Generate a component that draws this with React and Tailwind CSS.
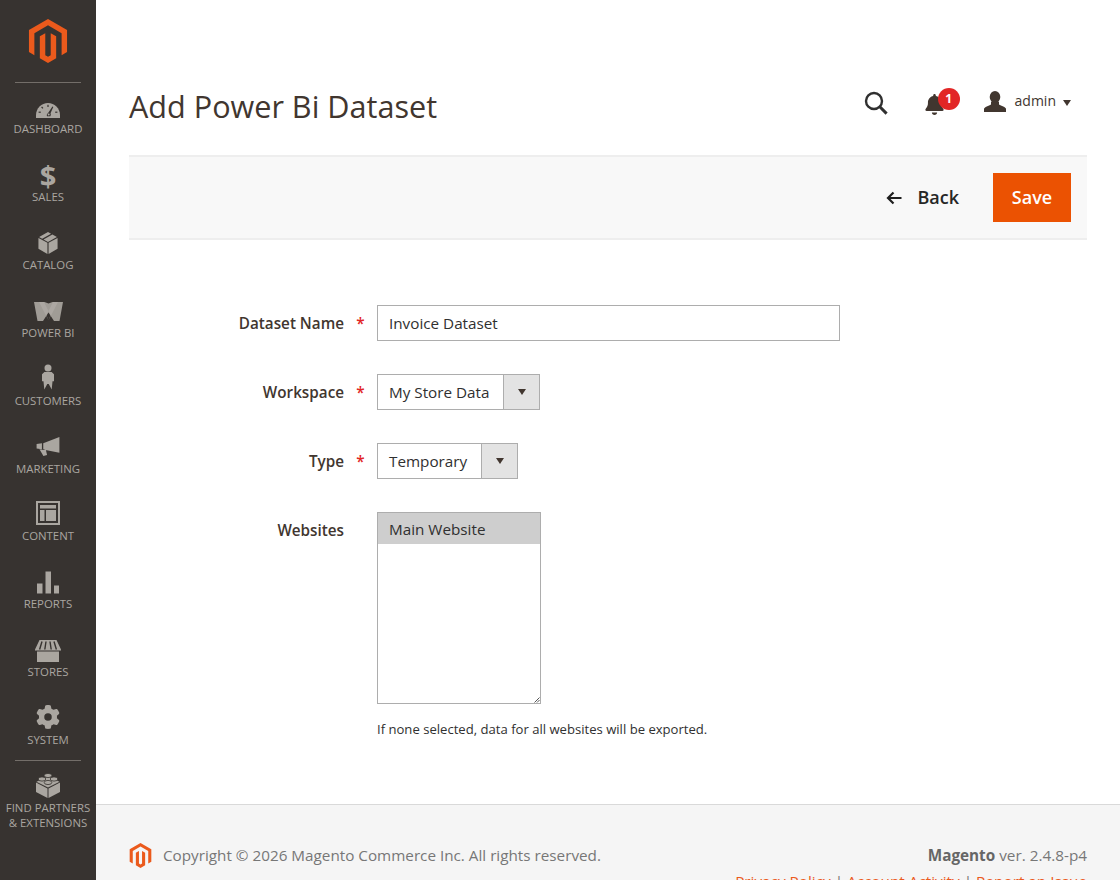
import React from 'react';
import { SiMagento } from 'react-icons/si';
import { FaGear, FaBell } from 'react-icons/fa6';

const C = '#aaa6a0';
const Gauge = () => (
  <svg width="24" height="15" viewBox="0 0 24 15">
    <path fill={C} d="M0 15v-3C0 5.500 5.500 0 12 0s12 5.500 12 12v3z" />
    <g fill="#373330">
      <rect x="11.400" y="1.800" width="1.200" height="2.200" />
      <rect x="5.600" y="3.600" width="1.300" height="2" transform="rotate(-40 6.200 4.600)" />
      <rect x="2.600" y="8.600" width="2.200" height="1.200" />
      <rect x="19.200" y="8.600" width="2.200" height="1.200" />
      <path d="M16.400 3.400l.9.500-2.800 6.300c.5.900.4 2.200-.2 3.100h-3.200c-.7-1.200-.2-2.700 1-3.400z" />
    </g>
    <circle cx="12.700" cy="11.400" r="1" fill={C} />
  </svg>
);
const Box = () => (
  <svg width="20" height="22" viewBox="0 0 20 23">
    <path fill={C} d="M9.400 11.200V23L0 17.600V6.200zM10.600 11.200V23l9.400-5.400V6.200zM10 0l3.200 1.800-9.300 5.300L.7 5.300zM14.600 2.600l4.700 2.700-9.300 5.200-4.700-2.600z" />
  </svg>
);
const Wave = () => (
  <svg width="29" height="19" viewBox="0 0 29 19">
    <path fill="#a09c96" d="M0 0h10.500l4 1.500 4-1.500H29l-3.500 19h-5.500l-5.500-8.500L9 19H3.500z" />
    <path fill="#bdb9b3" opacity=".4" d="M5 0h5l6.500 13-2 5.500zM24 0h-5l-6.500 13 2 5.500z" />
  </svg>
);
const Person = () => (
  <svg width="12" height="26" viewBox="0 0 13 27">
    <circle cx="6.500" cy="3.800" r="3.800" fill={C} />
    <path fill={C} d="M2.600 8h7.800L13 10.500V18h-1.600l-.9 9-3.200-6h-1.600l-3.200 6-.9-9H0v-7.500z" />
  </svg>
);
const Horn = () => (
  <svg width="24" height="19" viewBox="0 0 24 20">
    <path fill={C} d="M24 0v16.500L9.400 13.600 7 13V6.600zM0 7.300l5.600-.7v6.200L0 12.200zM3 13l4.200.6 2.600 0 1.200 5.400-3.800 1z" />
  </svg>
);
const Frame = () => (
  <svg width="24" height="24" viewBox="0 0 24 24">
    <path fill={C} fillRule="evenodd" d="M0 0h24v24H0zM2 2v20h20V2zM4 4h16v3.500H4zM4 9h4.500v11H4zM10 9h10v11H10z" />
  </svg>
);
const Bars = () => (
  <svg width="22" height="23" viewBox="0 0 22 22">
    <path fill={C} d="M0 12h5.500v10H0zM8.500 0H14v22H8.500zM17 14h5v8h-5z" />
  </svg>
);
const Store = () => (
  <svg width="26" height="22" viewBox="0 0 26 22">
    <path fill={C} d="M4.500 0h17L26 9.500c0 1.200-1 1.600-2 1.600v10.900H2V11.100C1 11.100 0 10.700 0 9.500z" />
    <g stroke="#373330" strokeWidth="1.400" fill="none">
      <path d="M7 1.500L4.600 9.500M11 1.500L9.800 9.500M15 1.500L16.200 9.500M19 1.500L21.400 9.500" />
      <path d="M1 11h24" strokeWidth="1" />
    </g>
  </svg>
);
const Lego = () => (
  <svg width="24" height="25" viewBox="0 0 24 25">
    <path fill={C} d="M0 9.500l11.500 6V25L0 19zM24 9.500l-11.500 6V25L24 19zM12 3.500L23.500 8.700 12 14.500.500 8.700z" />
    <g fill={C} stroke="#373330" strokeWidth=".8">
      <ellipse cx="12" cy="2.500" rx="3.800" ry="2.100" />
      <ellipse cx="6" cy="6" rx="3.800" ry="2.100" />
      <ellipse cx="18" cy="6" rx="3.800" ry="2.100" />
      <ellipse cx="12" cy="9.500" rx="3.800" ry="2.100" />
    </g>
  </svg>
);

const NAV = [
  ['Dashboard', <Gauge />, 'pb-[1px]', 'h-[68px]'],
  ['Sales', <span className="text-[29px] leading-[27px] font-bold text-[#aaa6a0] relative top-[2px]">$</span>, 'pb-0', 'h-[68px]'],
  ['Catalog', <Box />, 'pb-[1px]', 'h-[68px]'],
  ['Power BI', <Wave />, 'pb-[2px]', 'h-[68px]'],
  ['Customers', <Person />, 'pb-[1px]', 'h-[68px]'],
  ['Marketing', <Horn />, 'pb-[3px]', 'h-[67px]'],
  ['Content', <Frame />, 'pb-[1px]', 'h-[68px]'],
  ['Reports', <Bars />, 'pb-0', 'h-[68px]'],
  ['Stores', <Store />, 'pb-0', 'h-[68px]'],
  ['System', <FaGear size={24} color={C} />, 'pb-[1px]', 'h-[68px]'],
];

function NavItem({ label, icon, pad, height }) {
  return (
    <div className={`${height} flex flex-col items-center`}>
      <div className={`h-[27px] mt-[2px] flex items-end justify-center ${pad}`}>{icon}</div>
      <div className="mt-[2px] text-[11.400px] leading-[15px] uppercase text-[#aaa6a0] text-center whitespace-nowrap">{label}</div>
    </div>
  );
}

function Row({ label, required, children }) {
  return (
    <div className="flex items-start">
      <div className="w-[215px] text-right text-[15.250px] leading-[37px] font-semibold text-[#41362f]">{label}</div>
      <div className="w-[33px] text-center text-[15.250px] leading-[37px] font-semibold text-[#e22626]">{required ? '*' : ''}</div>
      {children}
    </div>
  );
}

function Select({ value, width, text }) {
  return (
    <div className={`h-[36px] flex border border-[#adadad] bg-white ${width}`}>
      <div className={`${text} pl-[11px] text-[15.250px] leading-[35px] text-[#303030]`}>{value}</div>
      <div className="flex-1 bg-[#e3e3e3] border-l border-[#adadad] flex items-center justify-center">
        <span className="w-0 h-0 border-x-[4.500px] border-x-transparent border-t-[6px] border-t-[#41362f]" />
      </div>
    </div>
  );
}

export default function App() {
  return (
    <div className="h-[880px] w-[1120px] overflow-hidden flex bg-white font-['Open_Sans',sans-serif]">
      <aside className="w-[96px] shrink-0 bg-[#373330] flex flex-col items-stretch">
        <div className="h-[83px] shrink-0 mx-[15px] border-b border-[#736e69] flex justify-center pt-[19px]">
          <SiMagento size={44} color="#eb5a1c" />
        </div>
        <div className="pt-[7px] flex flex-col">
          {NAV.map(([l, i, p, h]) => <NavItem key={l} label={l} icon={i} pad={p} height={h} />)}
        </div>
        <div className="mx-[15px] border-t border-[#736e69] -mt-[9px]" />
        <div className="flex flex-col items-center pt-[12px]">
          <Lego />
          <div className="mt-[2px] text-[11.400px] leading-[15px] uppercase text-[#aaa6a0] text-center whitespace-nowrap">Find Partners<br />&amp; Extensions</div>
        </div>
      </aside>

      <main className="flex-1 min-w-0 flex flex-col">
        <div className="px-[33px] flex-1">
          <header className="h-[155px] flex items-start justify-between">
            <h1 className="mt-[86px] text-[30.600px] leading-[40px] text-[#41362f] font-normal whitespace-nowrap">Add Power Bi Dataset</h1>
            <div className="mt-[88px] flex items-center text-[#41362f] pr-[16px]">
              <svg width="26" height="26" viewBox="0 0 26 26" fill="none" stroke="#303030" strokeWidth="2.400" className="mr-[35px] relative top-[2px]">
                <circle cx="11" cy="11" r="8" />
                <path d="M16.800 16.800l6.800 6.800" strokeWidth="3" />
              </svg>
              <div className="relative mr-[39px] top-[3px]">
                <FaBell size={21} color="#41362f" />
                <span className="absolute -top-[6px] left-[14px] w-[22px] h-[22px] rounded-full bg-[#e22626] text-white text-[12px] leading-[22px] font-bold text-center">1</span>
              </div>
              <svg width="22" height="21" viewBox="0 0 22 21" className="mr-[9px]">
                <ellipse cx="11" cy="6" rx="5.300" ry="6" fill="#41362f" />
                <path fill="#41362f" d="M0 21v-3c0-2 5-3 7-4.500V11h8v2.500c2 1.500 7 2.500 7 4.500v3z" />
              </svg>
              <span className="text-[14px] leading-[20px] text-[#41362f] mr-[7px]">admin</span>
              <span className="w-0 h-0 border-x-[4.500px] border-x-transparent border-t-[6px] border-t-[#41362f] relative top-[2px]" />
            </div>
          </header>

          <div className="h-[85px] bg-[#f8f8f8] border-y-2 border-[#eeeeee] flex items-start justify-end pr-[16px] pt-[16px]">
            <div className="h-[49px] flex items-center">
              <svg width="16" height="14" viewBox="0 0 16 14" fill="none" stroke="#1f1f1f" strokeWidth="2.200" className="mr-[15px]">
                <path d="M15.500 7H2M7.500 1.500L2 7l5.500 5.500" />
              </svg>
              <span className="text-[18px] font-semibold text-[#262626] mr-[34px]">Back</span>
              <button className="w-[78px] h-[49px] bg-[#eb5202] text-white text-[18px] font-semibold">Save</button>
            </div>
          </div>

          <form className="pt-[65px] flex flex-col gap-[32px]">
            <Row label="Dataset Name" required>
              <input readOnly value="Invoice Dataset" className="w-[463px] h-[36px] border border-[#adadad] bg-white pl-[11px] text-[15.250px] text-[#303030] outline-none" />
            </Row>
            <Row label="Workspace" required>
              <Select value="My Store Data" width="w-[163px]" text="w-[125px]" />
            </Row>
            <Row label="Type" required>
              <Select value="Temporary" width="w-[141px]" text="w-[103px]" />
            </Row>
            <Row label="Websites">
              <div>
                <div className="relative w-[164px] h-[192px] border border-[#adadad] bg-white">
                  <div className="h-[31px] bg-[#cecece] pl-[11px] text-[15.250px] leading-[33px] text-[#303030]">Main Website</div>
                  <svg width="6" height="6" viewBox="0 0 6 6" className="absolute right-0 bottom-0" stroke="#555" fill="none">
                    <path d="M0.500 5.500L5.500 0.500M3 5.500L5.500 3" />
                  </svg>
                </div>
                <p className="mt-[16px] text-[13.100px] leading-[18px] text-[#303030] whitespace-nowrap">If none selected, data for all websites will be exported.</p>
              </div>
            </Row>
          </form>
        </div>

        <footer className="h-[76px] shrink-0 bg-[#f5f5f5] border-t border-[#d9d9d9] px-[33px] pt-[38px] flex justify-between overflow-hidden">
          <div className="flex items-start">
            <SiMagento size={25} color="#eb5a1c" className="mr-[10px] -ml-[1px]" />
            <span className="text-[15.250px] leading-[24px] text-[#777777] whitespace-nowrap">Copyright © 2026 Magento Commerce Inc. All rights reserved.</span>
          </div>
          <div className="text-right text-[15.300px] text-[#777777] leading-[24px]">
            <div><b className="font-bold text-[#666666]">Magento</b> ver. 2.4.8-p4</div>
            <div className="mt-[2px] whitespace-nowrap"><span className="text-[#eb5a1c]">Privacy Policy</span> | <span className="text-[#eb5a1c]">Account Activity</span> | <span className="text-[#eb5a1c]">Report an Issue</span></div>
          </div>
        </footer>
      </main>
    </div>
  );
}
